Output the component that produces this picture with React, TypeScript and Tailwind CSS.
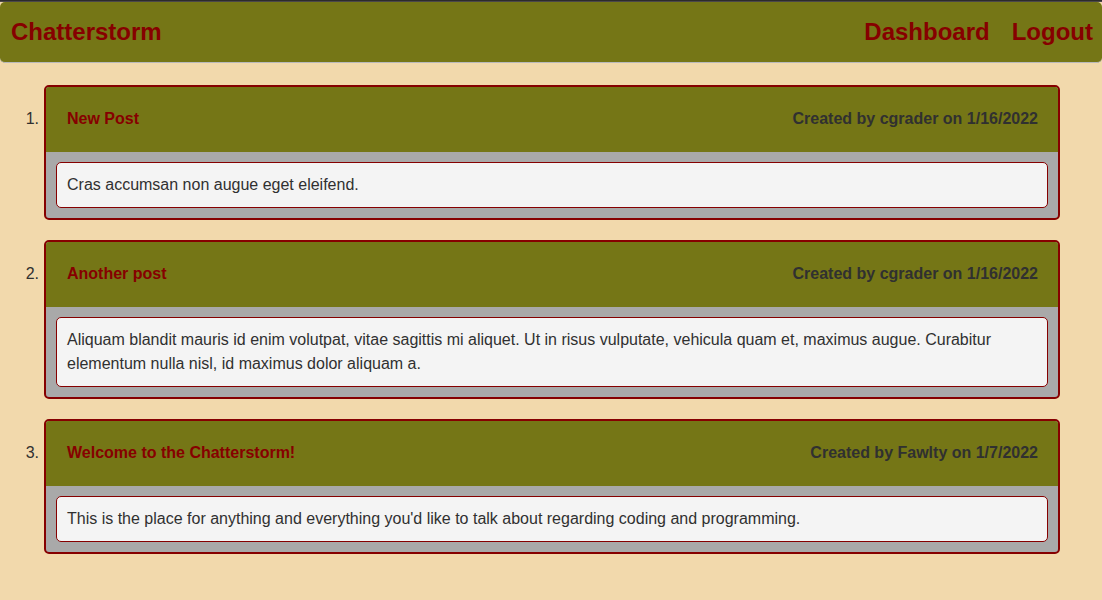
type Post = {
  title: string;
  author: string;
  date: string;
  body: string;
};

const posts: Post[] = [
  {
    title: "New Post",
    author: "cgrader",
    date: "1/16/2022",
    body: "Cras accumsan non augue eget eleifend.",
  },
  {
    title: "Another post",
    author: "cgrader",
    date: "1/16/2022",
    body: "Aliquam blandit mauris id enim volutpat, vitae sagittis mi aliquet. Ut in risus vulputate, vehicula quam et, maximus augue. Curabitur elementum nulla nisl, id maximus dolor aliquam a.",
  },
  {
    title: "Welcome to the Chatterstorm!",
    author: "Fawlty",
    date: "1/7/2022",
    body: "This is the place for anything and everything you'd like to talk about regarding coding and programming.",
  },
];

function Header() {
  return (
    <header className="flex items-center justify-between rounded-[5px] border-b border-[#b9b9bb] bg-[#757616] py-3 pr-[9px] pl-[11px] text-2xl leading-9 font-bold text-[#860000]">
      <h1>
        <a href="#home">Chatterstorm</a>
      </h1>
      <nav className="flex gap-[22px]">
        <a href="#dashboard">Dashboard</a>
        <a href="#logout">Logout</a>
      </nav>
    </header>
  );
}

function PostCard({ post }: { post: Post }) {
  return (
    <article className="min-w-0 flex-1 overflow-hidden rounded-[5px] border-2 border-[#860000] bg-[#a9a9a9]">
      <div className="flex items-center justify-between gap-4 bg-[#757616] pt-5 pr-5 pb-[21px] pl-[21px] font-bold">
        <h2 className="text-[#860000]">
          <a href="#post">{post.title}</a>
        </h2>
        <p>
          Created by {post.author} on {post.date}
        </p>
      </div>
      <div className="p-[10px]">
        <p className="rounded-[5px] border border-[#860000] bg-[#f4f4f4] p-[10px]">{post.body}</p>
      </div>
    </article>
  );
}

export default function App() {
  return (
    <div className="min-h-screen bg-[#f2d9ac] font-['Liberation_Sans',Arial,sans-serif] text-base leading-6 text-[#303030]">
      <div className="h-[2px] border-b border-[#4a4749] bg-[#2c2b2b]" />
      <Header />
      <main className="pt-[22px] pr-[42px] pb-10">
        <ol className="flex flex-col gap-5">
          {posts.map((post, index) => (
            <li key={post.title} className="flex gap-[5px]">
              <span className="w-[39px] shrink-0 pt-[22px] text-right">{index + 1}.</span>
              <PostCard post={post} />
            </li>
          ))}
        </ol>
      </main>
    </div>
  );
}
